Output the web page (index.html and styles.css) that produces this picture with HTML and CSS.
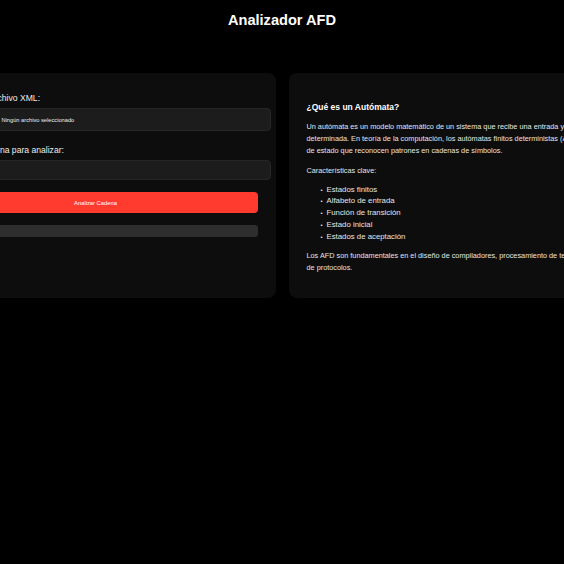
FILE: index.html
```html
<!DOCTYPE html>
<html lang="es">
<head>
<meta charset="utf-8">
<title>Analizador AFD</title>
<link rel="stylesheet" href="styles.css">
</head>
<body>
<h1 class="title">Analizador AFD</h1>
<main class="layout">
  <section class="panel panel-form">
    <label class="field-label">Selecciona un archivo XML:</label>
    <div class="file-input">
      <span class="file-btn">Seleccionar archivo</span>
      <span class="file-name">Ningún archivo seleccionado</span>
    </div>
    <label class="field-label field-label-2">Ingresa una cadena para analizar:</label>
    <div class="text-input"></div>
    <button class="analyze-btn">Analizar Cadena</button>
    <div class="result"></div>
  </section>
  <section class="panel panel-info">
    <h3 class="info-title">¿Qué es un Autómata?</h3>
    <p class="info-text">Un autómata es un modelo matemático de un sistema que recibe una entrada y genera una salida determinada. En teoría de la computación, los autómatas finitos deterministas (AFD) son máquinas de estado que reconocen patrones en cadenas de símbolos.</p>
    <p class="info-text info-sub">Características clave:</p>
    <ul class="info-list">
      <li>Estados finitos</li>
      <li>Alfabeto de entrada</li>
      <li>Función de transición</li>
      <li>Estado inicial</li>
      <li>Estados de aceptación</li>
    </ul>
    <p class="info-text info-last">Los AFD son fundamentales en el diseño de compiladores, procesamiento de texto y la verificación de protocolos.</p>
  </section>
</main>
</body>
</html>
```
FILE: styles.css
```css
html, body {
  margin: 0;
  padding: 0;
  background: #000;
  color: #fff;
  font-family: "Liberation Sans", Arial, sans-serif;
  overflow: hidden;
}
.title {
  margin: 10px 0 0;
  font-size: 14.6px;
  line-height: 20px;
  font-weight: bold;
  text-align: center;
  color: #fff;
}
.layout {
  margin-top: 43px;
  display: flex;
  justify-content: center;
  align-items: stretch;
  gap: 13px;
}
.panel {
  flex: none;
  width: 360px;
  box-sizing: border-box;
  background: #0d0d0d;
  border-radius: 8px;
}
.panel-form {
  display: flex;
  flex-direction: column;
  padding: 18px;
}
.panel-info {
  padding: 18px 14px 24px 18px;
}
.field-label {
  display: block;
  font-size: 8.6px;
  line-height: 11px;
  color: #ececec;
  margin-top: 2px;
  margin-bottom: 4px;
  white-space: nowrap;
}
.field-label-2 {
  margin-top: 14px;
}
.file-input {
  box-sizing: border-box;
  width: calc(100% + 13px);
  height: 23px;
  padding: 0 6px;
  background: #1c1c1c;
  border: 1px solid #262626;
  border-radius: 4px;
  display: flex;
  align-items: center;
}
.file-btn {
  flex: none;
  width: 57px;
  font-size: 5.7px;
  color: #ddd;
  overflow: hidden;
  white-space: nowrap;
  margin-right: 4px;
}
.file-name {
  font-size: 5.7px;
  color: #eee;
  white-space: nowrap;
}
.text-input {
  box-sizing: border-box;
  width: calc(100% + 13px);
  height: 20px;
  background: #1c1c1c;
  border: 1px solid #262626;
  border-radius: 4px;
}
.analyze-btn {
  margin-top: 12px;
  height: 21px;
  width: 100%;
  border: none;
  border-radius: 4px;
  background: #ff3b30;
  color: #fff;
  font-family: "Liberation Sans", Arial, sans-serif;
  font-size: 5.8px;
  padding: 0;
}
.result {
  margin-top: 12px;
  height: 12px;
  width: 100%;
  background: #2e2e2e;
  border-radius: 3px;
}
.info-title {
  margin: 10.5px 0 0;
  font-size: 8.5px;
  line-height: 10px;
  font-weight: bold;
  color: #fff;
}
.info-text {
  margin: 9px 0 0;
  font-size: 7.3px;
  line-height: 12px;
  color: #e6e6e6;
}
.info-sub {
  margin-top: 8px;
}
.info-list {
  margin: 7px 0 0;
  padding-left: 20px;
  list-style: none;
  font-size: 7.8px;
  line-height: 11.75px;
  color: #e6e6e6;
}
.info-list li {
  height: 11.75px;
}
.info-list li::before {
  content: "•";
  display: inline-block;
  width: 6px;
  margin-left: -6px;
  font-size: 6px;
  line-height: 0;
}
.info-last {
  margin-top: 8px;
}
```
